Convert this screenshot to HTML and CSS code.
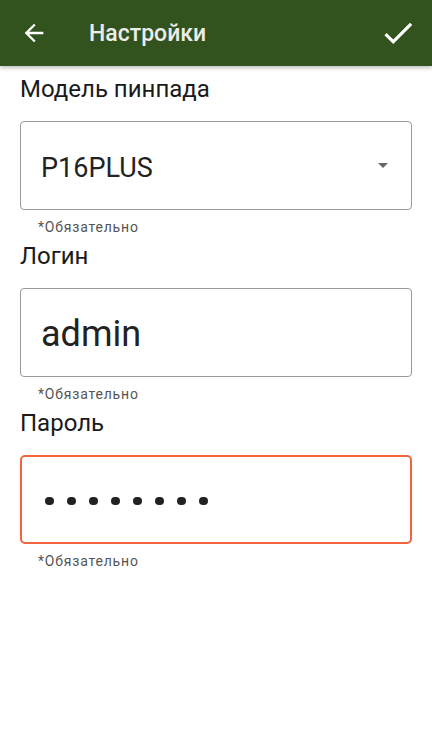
FILE: index.html
```html
<!DOCTYPE html>
<html lang="ru">
<head>
  <meta charset="UTF-8" />
  <meta name="viewport" content="width=device-width, initial-scale=1.0"/>
  <title>Настройки</title>
  <link rel="stylesheet" href="styles.css">
</head>
<body>
  <header class="toolbar">
    <button class="icon-btn back" aria-label="Назад">
      <svg viewBox="0 0 24 24" width="28" height="28"><path d="M20 11H7.83l5.59-5.59L12 4l-8 8 8 8 1.41-1.41L7.83 13H20v-2z" fill="currentColor"/></svg>
    </button>
    <h1 class="title">Настройки</h1>
    <button class="icon-btn done" aria-label="Готово">
      <svg viewBox="0 0 24 24" width="38" height="38"><path d="M9 16.17L4.83 12l-1.42 1.41L9 19 21 7l-1.41-1.41z" fill="currentColor"/></svg>
    </button>
  </header>

  <main class="form">
    <div class="field">
      <label class="field-label">Модель пинпада</label>
      <div class="box select">
        <span class="value small">P16PLUS</span>
        <span class="caret"></span>
      </div>
      <div class="helper">*Обязательно</div>
    </div>

    <div class="field">
      <label class="field-label">Логин</label>
      <div class="box">
        <span class="value">admin</span>
      </div>
      <div class="helper">*Обязательно</div>
    </div>

    <div class="field">
      <label class="field-label">Пароль</label>
      <div class="box focused">
        <span class="dots">
          <i></i><i></i><i></i><i></i><i></i><i></i><i></i><i></i>
        </span>
      </div>
      <div class="helper">*Обязательно</div>
    </div>
  </main>
</body>
</html>
```

FILE: styles.css
```css
body {
  margin: 0;
  background: #fff;
  font-family: Roboto, 'Noto Sans', sans-serif;
  color: #1c1c1c;
}

.toolbar {
  height: 66px;
  background: #32521e;
  display: flex;
  align-items: center;
  box-shadow: 0 2px 4px rgba(0, 0, 0, 0.25);
  position: relative;
}

.icon-btn {
  background: none;
  border: none;
  padding: 0;
  color: #fff;
  display: flex;
  align-items: center;
  justify-content: center;
}

.back {
  width: 28px;
  height: 28px;
  margin-left: 20px;
}

.title {
  margin: 0 0 0 41px;
  flex: 1;
  font-size: 23px;
  font-weight: 500;
  color: #ececec;
}

.done {
  width: 38px;
  height: 38px;
  margin-right: 15px;
}

.form {
  padding: 9px 20px 0;
}

.field {
  margin-bottom: 7px;
}

.field-label {
  display: block;
  font-size: 24px;
  line-height: 28px;
  color: #1a1a1a;
}

.box {
  margin-top: 18px;
  height: 89px;
  box-sizing: border-box;
  border: 1px solid #9a9a9a;
  border-radius: 4px;
  display: flex;
  align-items: center;
  padding: 0 20px;
}

.value {
  font-size: 36px;
  color: #222;
  padding-top: 2px;
}

.value.small {
  font-size: 27px;
  flex: 1;
  padding-top: 4px;
}

.caret {
  width: 0;
  height: 0;
  border-left: 5.5px solid transparent;
  border-right: 5.5px solid transparent;
  border-top: 5px solid #666;
  margin-right: 3px;
}

.focused {
  border: 2px solid #f2643e;
  border-radius: 5px;
  padding-left: 23px;
}

.dots {
  display: flex;
  gap: 13.5px;
  padding-top: 3px;
}

.dots i {
  width: 8.5px;
  height: 8.5px;
  border-radius: 50%;
  background: #222;
}

.helper {
  margin-top: 9px;
  padding-left: 18px;
  font-size: 14px;
  line-height: 16px;
  letter-spacing: 0.8px;
  color: #555;
}
```
